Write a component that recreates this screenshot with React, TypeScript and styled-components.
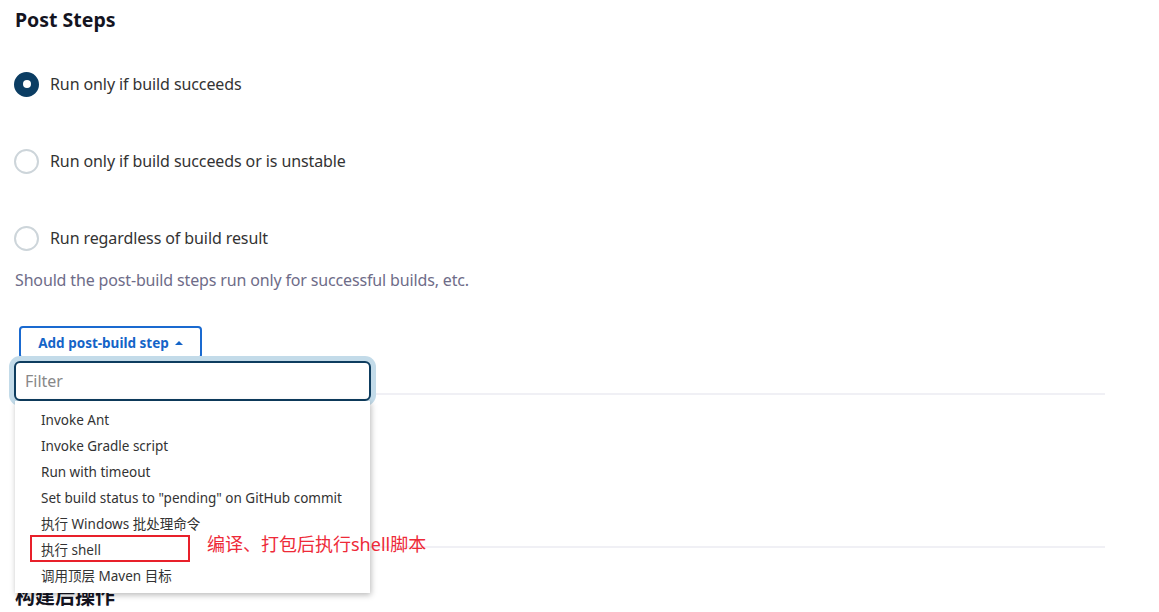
import React from "react";
import styled, { createGlobalStyle } from "styled-components";

const Global = createGlobalStyle`
  html, body { margin: 0; padding: 0; background: #fff; }
  body {
    font-family: "Noto Sans", "Noto Sans CJK SC", sans-serif;
    color: #333;
    overflow: hidden;
  }
  * { box-sizing: border-box; }
`;

const Page = styled.div`
  width: 1105px;
  padding-left: 15px;
  height: 612px;
  overflow: hidden;
`;

const Title = styled.h2`
  margin: 0;
  height: 40px;
  line-height: 40px;
  font-size: 19.5px;
  font-weight: 700;
  color: #14141f;
`;

const RadioGroup = styled.div`
  display: flex;
  flex-direction: column;
  gap: 53px;
  margin-top: 32px;
`;

const RadioRow = styled.label`
  display: flex;
  align-items: center;
  gap: 11px;
  height: 24px;
  margin-left: -1px;
  font-size: 16px;
  letter-spacing: -0.1px;
  color: #333;
`;

const RadioDot = styled.span<{ $checked?: boolean }>`
  width: 25px;
  height: 25px;
  border-radius: 50%;
  flex: none;
  display: flex;
  align-items: center;
  justify-content: center;
  background: ${(p) => (p.$checked ? "#0b3d63" : "#fff")};
  border: 2px solid ${(p) => (p.$checked ? "#0b3d63" : "#cdd5da")};
  &::after {
    content: "";
    display: ${(p) => (p.$checked ? "block" : "none")};
    width: 8px;
    height: 8px;
    border-radius: 50%;
    background: #fff;
  }
`;

const Help = styled.div`
  margin-top: 18px;
  height: 24px;
  line-height: 24px;
  font-size: 16px;
  letter-spacing: -0.15px;
  color: #6e6c88;
`;

const ButtonWrap = styled.div`
  position: relative;
  margin-top: 34px;
  height: 33px;
`;

const AddButton = styled.button`
  margin-left: 4px;
  height: 33px;
  width: 183px;
  display: flex;
  align-items: center;
  justify-content: center;
  gap: 6px;
  background: #fff;
  border: 2px solid #1a6ad0;
  border-radius: 4px;
  color: #1464c8;
  font-family: inherit;
  font-size: 13.5px;
  font-weight: 700;
  padding: 0;
`;

const Caret = styled.span`
  width: 0;
  height: 0;
  border-left: 4px solid transparent;
  border-right: 4px solid transparent;
  border-bottom: 4px solid #1464c8;
`;

const Dropdown = styled.div`
  position: absolute;
  left: -1px;
  top: 35px;
  width: 357px;
  z-index: 5;
`;

const FilterInput = styled.input`
  display: block;
  width: 357px;
  height: 40px;
  border: 2px solid #0e3d5f;
  border-radius: 6px;
  box-shadow: 0 0 0 5px #c3dbe9;
  padding: 0 9px;
  font-family: inherit;
  font-size: 16px;
  color: #333;
  outline: none;
  caret-color: #111;
  &::placeholder { color: #888; }
`;

const Menu = styled.ul`
  list-style: none;
  margin: 0 0 0 1px;
  padding: 5px 0;
  width: 355px;
  background: #fff;
  box-shadow: 1px 2px 6px rgba(0, 0, 0, 0.28);
  position: relative;
`;

const Item = styled.li`
  position: relative;
  height: 26px;
  line-height: 28px;
  padding-left: 26px;
  font-size: 13.5px;
  color: #333;
  white-space: nowrap;
`;

const Highlight = styled.span`
  position: absolute;
  left: 15px;
  top: -1px;
  width: 160px;
  height: 27px;
  border: 2px solid #e8202a;
`;

const Note = styled.span`
  position: absolute;
  left: 192px;
  top: -5px;
  line-height: 26px;
  font-size: 18px;
  color: #ee2a38;
`;

const Divider = styled.div<{ $gap: number }>`
  margin-top: ${(p) => p.$gap}px;
  height: 2px;
  background: #f0f0f5;
`;

const SubTitle = styled.h2`
  margin: 37px 0 0;
  height: 24px;
  line-height: 24px;
  font-size: 20px;
  font-weight: 700;
  color: #14141f;
`;

const items = [
  "Invoke Ant",
  "Invoke Gradle script",
  "Run with timeout",
  'Set build status to "pending" on GitHub commit',
  "执行 Windows 批处理命令",
  "执行 shell",
  "调用顶层 Maven 目标",
];

export default function App() {
  return (
    <>
      <Global />
      <Page>
        <Title>Post Steps</Title>
        <RadioGroup>
          <RadioRow>
            <RadioDot $checked />
            Run only if build succeeds
          </RadioRow>
          <RadioRow>
            <RadioDot />
            Run only if build succeeds or is unstable
          </RadioRow>
          <RadioRow>
            <RadioDot />
            Run regardless of build result
          </RadioRow>
        </RadioGroup>
        <Help>Should the post-build steps run only for successful builds, etc.</Help>
        <ButtonWrap>
          <AddButton>
            Add post-build step <Caret />
          </AddButton>
          <Dropdown>
            <FilterInput placeholder="Filter" autoFocus />
            <Menu>
              {items.map((t) => (
                <Item key={t}>
                  {t}
                  {t === "执行 shell" && (
                    <>
                      <Highlight />
                      <Note>编译、打包后执行shell脚本</Note>
                    </>
                  )}
                </Item>
              ))}
            </Menu>
          </Dropdown>
        </ButtonWrap>
        <Divider $gap={34} />
        <Divider $gap={151} />
        <SubTitle>构建后操作</SubTitle>
      </Page>
    </>
  );
}
